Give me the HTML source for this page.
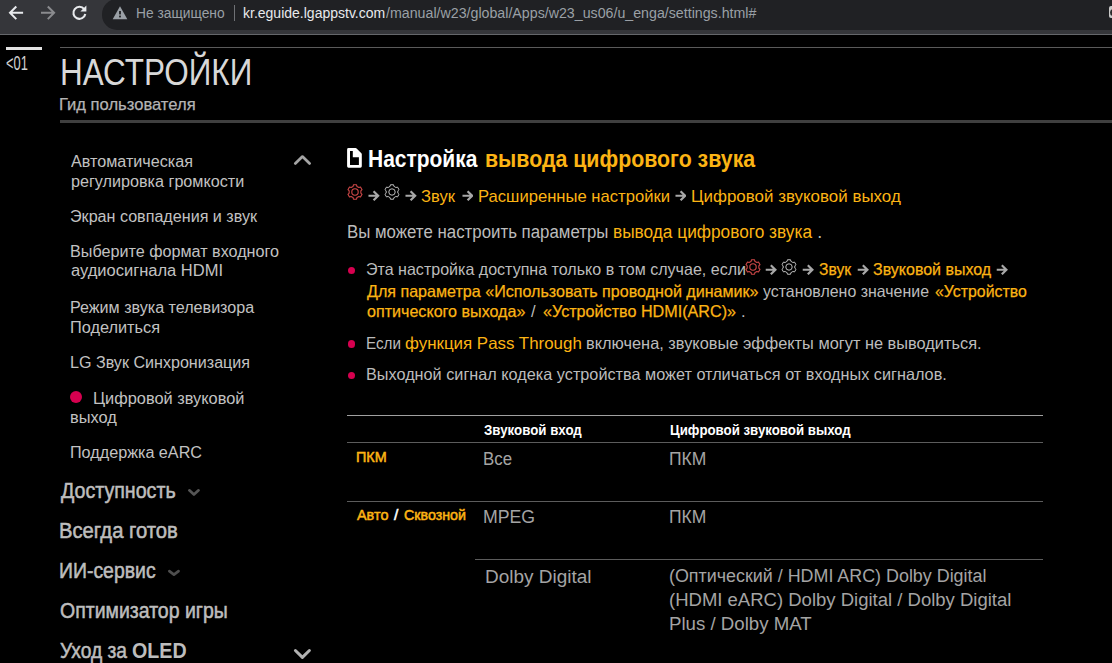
<!DOCTYPE html>
<html><head><meta charset="utf-8"><style>
html,body{margin:0;padding:0;background:#000;width:1112px;height:663px;overflow:hidden;}
body{position:relative;font-family:"Liberation Sans",sans-serif;}
.t{position:absolute;white-space:nowrap;transform-origin:0 50%;}
</style></head><body>
<div style="position:absolute;left:0;top:0;width:1112px;height:34px;background:#35363a"></div>
<div style="position:absolute;left:0;top:34px;width:1112px;height:1px;background:#65676b"></div>
<div style="position:absolute;left:102px;top:-1px;width:1040px;height:30.5px;border-radius:15px;background:#202124"></div>
<svg style="position:absolute;left:0;top:0" width="100" height="34"><path d="M23.1 12.8 H10 M16.3 6.5 L10 12.8 L16.3 19.1" fill="none" stroke="#e8eaed" stroke-width="2"/><path d="M41 12.8 H54.1 M47.8 6.5 L54.1 12.8 L47.8 19.1" fill="none" stroke="#8a8b8e" stroke-width="2"/></svg>
<svg style="position:absolute;left:71px;top:4px" width="17" height="17" viewBox="0 0 17 17"><path d="M13.2 5.2 A6 6 0 1 0 14.3 10" fill="none" stroke="#e8eaed" stroke-width="2.1"/><path d="M15.4 1.6 V7.6 H9.4 Z" fill="#e8eaed"/></svg>
<svg style="position:absolute;left:112px;top:6px" width="16" height="14" viewBox="0 0 16 14"><path d="M8 0.3 L15.3 13.3 H0.7 Z" fill="#9aa0a6"/><rect x="7.1" y="5" width="1.8" height="3.4" fill="#202124"/><rect x="7.1" y="9.6" width="1.8" height="1.8" fill="#202124"/></svg>
<div style="position:absolute;left:233.5px;top:5px;width:1px;height:16px;background:#6f7175"></div>
<div style="position:absolute;left:1109px;top:6px;width:10px;height:12px;border-radius:2px;background:#c8c8c8"></div>
<div style="position:absolute;left:1109.5px;top:8.5px;width:7px;height:7px;border-radius:50%;box-sizing:border-box;border:2px solid #2a2a2a"></div>
<div style="position:absolute;left:6px;top:47px;width:36px;height:3px;background:#e2e2e2"></div>
<div style="position:absolute;left:60px;top:47px;width:1052px;height:1px;background:#5a5a5a"></div>
<div style="position:absolute;left:60px;top:120px;width:1052px;height:3px;background:#3f3f3f"></div>
<svg style="position:absolute;left:0;top:0" width="1112" height="663"><path d="M295.30 163.40 L302.45 156.60 L309.60 163.40" fill="none" stroke="#a4a4a4" stroke-width="2.8" stroke-linecap="round" stroke-linejoin="round"/></svg>
<div style="position:absolute;left:70px;top:391px;width:12px;height:12px;border-radius:50%;background:#d6004f"></div>
<svg style="position:absolute;left:0;top:0" width="1112" height="663"><path d="M189.35 490.35 L193.95 494.55 L198.55 490.35" fill="none" stroke="#555555" stroke-width="2.7" stroke-linecap="round" stroke-linejoin="round"/></svg>
<svg style="position:absolute;left:0;top:0" width="1112" height="663"><path d="M169.35 571.15 L173.95 574.65 L178.55 571.15" fill="none" stroke="#4e4e4e" stroke-width="2.7" stroke-linecap="round" stroke-linejoin="round"/></svg>
<svg style="position:absolute;left:0;top:0" width="1112" height="663"><path d="M295.40 650.50 L302.40 657.40 L309.40 650.50" fill="none" stroke="#b2b2b2" stroke-width="3" stroke-linecap="round" stroke-linejoin="round"/></svg>
<svg style="position:absolute;left:346px;top:148px" width="17" height="21" viewBox="0 0 17 21"><path d="M2.55 1.45 H9.6 L14.35 6.2 V18.35 H2.55 Z" fill="none" stroke="#fff" stroke-width="2.9" stroke-linejoin="round"/><path d="M6.8 1.45 H9.6 L14.35 6.2 V9.3 H6.8 Z" fill="#fff"/></svg>
<svg style="position:absolute;left:347.2px;top:184.4px" width="16" height="16" viewBox="0 0 16 16"><path d="M5.05 2.89 L6.08 2.42 L6.46 0.76 L9.54 0.76 L9.92 2.42 L10.95 2.89 L11.87 3.55 L13.50 3.05 L15.04 5.71 L13.79 6.87 L13.90 8.00 L13.79 9.13 L15.04 10.29 L13.50 12.95 L11.87 12.45 L10.95 13.11 L9.92 13.58 L9.54 15.24 L6.46 15.24 L6.08 13.58 L5.05 13.11 L4.13 12.45 L2.50 12.95 L0.96 10.29 L2.21 9.13 L2.10 8.00 L2.21 6.87 L0.96 5.71 L2.50 3.05 L4.13 3.55 Z" fill="none" stroke="#d04848" stroke-width="1.1" stroke-linejoin="round"/><circle cx="8" cy="8" r="3.2" fill="none" stroke="#d04848" stroke-width="1.1"/></svg>
<svg style="position:absolute;left:368px;top:189.8px" width="11.5" height="11.5" viewBox="0 0 12 12"><path d="M0.5 6 H10.3 M5.8 1.3 L10.6 6 L5.8 10.7" fill="none" stroke="#a8a8a8" stroke-width="2.3" stroke-linecap="butt" stroke-linejoin="miter"/></svg>
<svg style="position:absolute;left:384px;top:184.4px" width="16" height="16" viewBox="0 0 16 16"><path d="M5.05 2.89 L6.08 2.42 L6.46 0.76 L9.54 0.76 L9.92 2.42 L10.95 2.89 L11.87 3.55 L13.50 3.05 L15.04 5.71 L13.79 6.87 L13.90 8.00 L13.79 9.13 L15.04 10.29 L13.50 12.95 L11.87 12.45 L10.95 13.11 L9.92 13.58 L9.54 15.24 L6.46 15.24 L6.08 13.58 L5.05 13.11 L4.13 12.45 L2.50 12.95 L0.96 10.29 L2.21 9.13 L2.10 8.00 L2.21 6.87 L0.96 5.71 L2.50 3.05 L4.13 3.55 Z" fill="none" stroke="#c0c0c0" stroke-width="1.0" stroke-linejoin="round"/><circle cx="8" cy="8" r="3.2" fill="none" stroke="#c0c0c0" stroke-width="1.0"/></svg>
<svg style="position:absolute;left:405px;top:189.8px" width="11.5" height="11.5" viewBox="0 0 12 12"><path d="M0.5 6 H10.3 M5.8 1.3 L10.6 6 L5.8 10.7" fill="none" stroke="#a8a8a8" stroke-width="2.3" stroke-linecap="butt" stroke-linejoin="miter"/></svg>
<svg style="position:absolute;left:461.5px;top:189.8px" width="11.5" height="11.5" viewBox="0 0 12 12"><path d="M0.5 6 H10.3 M5.8 1.3 L10.6 6 L5.8 10.7" fill="none" stroke="#a8a8a8" stroke-width="2.3" stroke-linecap="butt" stroke-linejoin="miter"/></svg>
<svg style="position:absolute;left:674.5px;top:189.8px" width="11.5" height="11.5" viewBox="0 0 12 12"><path d="M0.5 6 H10.3 M5.8 1.3 L10.6 6 L5.8 10.7" fill="none" stroke="#a8a8a8" stroke-width="2.3" stroke-linecap="butt" stroke-linejoin="miter"/></svg>
<div style="position:absolute;left:347.6px;top:266.85px;width:7.5px;height:7.5px;border-radius:50%;background:#d6004f"></div>
<div style="position:absolute;left:347.6px;top:340.45px;width:7.5px;height:7.5px;border-radius:50%;background:#d6004f"></div>
<div style="position:absolute;left:347.6px;top:371.75px;width:7.5px;height:7.5px;border-radius:50%;background:#d6004f"></div>
<svg style="position:absolute;left:745.3px;top:259.1px" width="16" height="16" viewBox="0 0 16 16"><path d="M5.05 2.89 L6.08 2.42 L6.46 0.76 L9.54 0.76 L9.92 2.42 L10.95 2.89 L11.87 3.55 L13.50 3.05 L15.04 5.71 L13.79 6.87 L13.90 8.00 L13.79 9.13 L15.04 10.29 L13.50 12.95 L11.87 12.45 L10.95 13.11 L9.92 13.58 L9.54 15.24 L6.46 15.24 L6.08 13.58 L5.05 13.11 L4.13 12.45 L2.50 12.95 L0.96 10.29 L2.21 9.13 L2.10 8.00 L2.21 6.87 L0.96 5.71 L2.50 3.05 L4.13 3.55 Z" fill="none" stroke="#d04848" stroke-width="1.1" stroke-linejoin="round"/><circle cx="8" cy="8" r="3.2" fill="none" stroke="#d04848" stroke-width="1.1"/></svg>
<svg style="position:absolute;left:765px;top:263.6px" width="12" height="11.5" viewBox="0 0 12 12"><path d="M0.5 6 H10.3 M5.8 1.3 L10.6 6 L5.8 10.7" fill="none" stroke="#a8a8a8" stroke-width="2.3" stroke-linecap="butt" stroke-linejoin="miter"/></svg>
<svg style="position:absolute;left:781.3px;top:259.1px" width="16" height="16" viewBox="0 0 16 16"><path d="M5.05 2.89 L6.08 2.42 L6.46 0.76 L9.54 0.76 L9.92 2.42 L10.95 2.89 L11.87 3.55 L13.50 3.05 L15.04 5.71 L13.79 6.87 L13.90 8.00 L13.79 9.13 L15.04 10.29 L13.50 12.95 L11.87 12.45 L10.95 13.11 L9.92 13.58 L9.54 15.24 L6.46 15.24 L6.08 13.58 L5.05 13.11 L4.13 12.45 L2.50 12.95 L0.96 10.29 L2.21 9.13 L2.10 8.00 L2.21 6.87 L0.96 5.71 L2.50 3.05 L4.13 3.55 Z" fill="none" stroke="#c0c0c0" stroke-width="1.0" stroke-linejoin="round"/><circle cx="8" cy="8" r="3.2" fill="none" stroke="#c0c0c0" stroke-width="1.0"/></svg>
<svg style="position:absolute;left:802px;top:263.6px" width="12" height="11.5" viewBox="0 0 12 12"><path d="M0.5 6 H10.3 M5.8 1.3 L10.6 6 L5.8 10.7" fill="none" stroke="#a8a8a8" stroke-width="2.3" stroke-linecap="butt" stroke-linejoin="miter"/></svg>
<svg style="position:absolute;left:857px;top:263.6px" width="12" height="11.5" viewBox="0 0 12 12"><path d="M0.5 6 H10.3 M5.8 1.3 L10.6 6 L5.8 10.7" fill="none" stroke="#a8a8a8" stroke-width="2.3" stroke-linecap="butt" stroke-linejoin="miter"/></svg>
<svg style="position:absolute;left:996px;top:263.6px" width="12" height="11.5" viewBox="0 0 12 12"><path d="M0.5 6 H10.3 M5.8 1.3 L10.6 6 L5.8 10.7" fill="none" stroke="#a8a8a8" stroke-width="2.3" stroke-linecap="butt" stroke-linejoin="miter"/></svg>
<div style="position:absolute;left:347px;top:415px;width:696px;height:1px;background:#a0a0a0"></div>
<div style="position:absolute;left:347px;top:442px;width:696px;height:1px;background:#5c5c5c"></div>
<div style="position:absolute;left:347px;top:501px;width:696px;height:1px;background:#5c5c5c"></div>
<div style="position:absolute;left:475px;top:559px;width:568px;height:1px;background:#5c5c5c"></div>
<div class="t" id="t0" style="left:136.19px;top:6.05px;font-size:14px;line-height:14px;font-weight:400;color:#9aa0a6;transform:scaleX(0.9847);">Не защищено</div>
<div class="t" id="t1" style="left:243.40px;top:6.05px;font-size:14px;line-height:14px;font-weight:400;color:#e8eaed;transform:scaleX(1.0003);">kr.eguide.lgappstv.com</div>
<div class="t" id="t2" style="left:385.60px;top:6.05px;font-size:14px;line-height:14px;font-weight:400;color:#9aa0a6;transform:scaleX(1.0147);">/manual/w23/global/Apps/w23_us06/u_enga/settings.html#</div>
<div class="t" id="t3" style="left:6.20px;top:52.67px;font-size:20px;line-height:20px;font-weight:400;color:#d0d0d0;transform:scaleX(0.6428);">&lt;01</div>
<div class="t" id="t4" style="left:59.56px;top:54.25px;font-size:37.5px;line-height:37.5px;font-weight:400;color:#d8d8d8;transform:scaleX(0.8392);">НАСТРОЙКИ</div>
<div class="t" id="t5" style="left:58.99px;top:95.61px;font-size:17px;line-height:17px;font-weight:400;-webkit-text-stroke:0.25px;color:#b4b4b4;transform:scaleX(0.9755);">Гид пользователя</div>
<div class="t" id="t6" style="left:71.00px;top:154.15px;font-size:16px;line-height:16px;font-weight:400;color:#c2c2c2;transform:scaleX(1.0098);">Автоматическая</div>
<div class="t" id="t7" style="left:71.00px;top:174.45px;font-size:16px;line-height:16px;font-weight:400;color:#c2c2c2;transform:scaleX(1.0097);">регулировка громкости</div>
<div class="t" id="t8" style="left:69.99px;top:209.45px;font-size:16px;line-height:16px;font-weight:400;color:#c2c2c2;transform:scaleX(1.0070);">Экран совпадения и звук</div>
<div class="t" id="t9" style="left:69.99px;top:244.45px;font-size:16px;line-height:16px;font-weight:400;color:#c2c2c2;transform:scaleX(1.0098);">Выберите формат входного</div>
<div class="t" id="t10" style="left:71.00px;top:262.85px;font-size:16px;line-height:16px;font-weight:400;color:#c2c2c2;transform:scaleX(1.0310);">аудиосигнала HDMI</div>
<div class="t" id="t11" style="left:70.00px;top:299.65px;font-size:16px;line-height:16px;font-weight:400;color:#c2c2c2;transform:scaleX(1.0066);">Режим звука телевизора</div>
<div class="t" id="t12" style="left:69.98px;top:320.45px;font-size:16px;line-height:16px;font-weight:400;color:#c2c2c2;transform:scaleX(1.0192);">Поделиться</div>
<div class="t" id="t13" style="left:69.99px;top:354.85px;font-size:16px;line-height:16px;font-weight:400;color:#c2c2c2;transform:scaleX(1.0059);">LG Звук Синхронизация</div>
<div class="t" id="t14" style="left:93.19px;top:390.95px;font-size:16px;line-height:16px;font-weight:400;color:#c2c2c2;transform:scaleX(1.0227);">Цифровой звуковой</div>
<div class="t" id="t15" style="left:69.98px;top:410.15px;font-size:16px;line-height:16px;font-weight:400;color:#c2c2c2;transform:scaleX(1.0246);">выход</div>
<div class="t" id="t16" style="left:69.99px;top:445.05px;font-size:16px;line-height:16px;font-weight:400;color:#c2c2c2;transform:scaleX(1.0108);">Поддержка eARC</div>
<div class="t" id="t17" style="left:61.19px;top:480.37px;font-size:22px;line-height:22px;font-weight:400;-webkit-text-stroke:0.55px;color:#bdbdbd;transform:scaleX(0.8916);">Доступность</div>
<div class="t" id="t18" style="left:59.19px;top:520.37px;font-size:22px;line-height:22px;font-weight:400;-webkit-text-stroke:0.55px;color:#bdbdbd;transform:scaleX(0.9197);">Всегда готов</div>
<div class="t" id="t19" style="left:59.19px;top:560.37px;font-size:22px;line-height:22px;font-weight:400;-webkit-text-stroke:0.55px;color:#bdbdbd;transform:scaleX(0.8830);">ИИ-сервис</div>
<div class="t" id="t20" style="left:60.20px;top:600.37px;font-size:22px;line-height:22px;font-weight:400;-webkit-text-stroke:0.55px;color:#bdbdbd;transform:scaleX(0.8859);">Оптимизатор игры</div>
<div class="t" id="t21" style="left:60.21px;top:639.77px;font-size:22px;line-height:22px;font-weight:400;-webkit-text-stroke:0.55px;color:#bdbdbd;transform:scaleX(0.8729);">Уход за</div>
<div class="t" id="t22" style="left:132.00px;top:639.77px;font-size:22px;line-height:22px;font-weight:700;color:#bdbdbd;transform:scaleX(0.8934);">OLED</div>
<div class="t" id="t23" style="left:367.80px;top:147.18px;font-size:24px;line-height:24px;font-weight:700;color:#ffffff;transform:scaleX(0.8737);">Настройка</div>
<div class="t" id="t24" style="left:484.60px;top:147.18px;font-size:24px;line-height:24px;font-weight:700;color:#fcb414;transform:scaleX(0.8888);">вывода цифрового звука</div>
<div class="t" id="t25" style="left:420.98px;top:187.61px;font-size:17px;line-height:17px;font-weight:400;color:#fcb414;transform:scaleX(0.9753);">Звук</div>
<div class="t" id="t26" style="left:477.99px;top:187.61px;font-size:17px;line-height:17px;font-weight:400;color:#fcb414;transform:scaleX(0.9776);">Расширенные настройки</div>
<div class="t" id="t27" style="left:691.00px;top:187.61px;font-size:17px;line-height:17px;font-weight:400;color:#fcb414;transform:scaleX(0.9962);">Цифровой звуковой выход</div>
<div class="t" id="t28" style="left:346.59px;top:222.66px;font-size:18px;line-height:18px;font-weight:400;color:#bcbcbc;transform:scaleX(0.9360);">Вы можете настроить параметры</div>
<div class="t" id="t29" style="left:612.80px;top:222.66px;font-size:18px;line-height:18px;font-weight:400;color:#fcb414;transform:scaleX(0.9593);">вывода цифрового звука</div>
<div class="t" id="t30" style="left:817.20px;top:222.66px;font-size:18px;line-height:18px;font-weight:400;color:#bcbcbc;">.</div>
<div class="t" id="t31" style="left:365.60px;top:261.13px;font-size:16.5px;line-height:16.5px;font-weight:400;color:#bcbcbc;transform:scaleX(0.9724);">Эта настройка доступна только в том случае, если</div>
<div class="t" id="t32" style="left:819.22px;top:261.13px;font-size:16.5px;line-height:16.5px;font-weight:400;-webkit-text-stroke:0.25px;color:#fcb414;transform:scaleX(0.9460);">Звук</div>
<div class="t" id="t33" style="left:873.00px;top:261.13px;font-size:16.5px;line-height:16.5px;font-weight:400;-webkit-text-stroke:0.25px;color:#fcb414;transform:scaleX(0.9697);">Звуковой выход</div>
<div class="t" id="t34" style="left:366.60px;top:282.53px;font-size:16.5px;line-height:16.5px;font-weight:400;-webkit-text-stroke:0.25px;color:#fcb414;transform:scaleX(0.9748);">Для параметра «Использовать проводной динамик»</div>
<div class="t" id="t35" style="left:763.00px;top:282.53px;font-size:16.5px;line-height:16.5px;font-weight:400;color:#bcbcbc;transform:scaleX(0.9651);">установлено значение</div>
<div class="t" id="t36" style="left:934.60px;top:282.53px;font-size:16.5px;line-height:16.5px;font-weight:400;-webkit-text-stroke:0.25px;color:#fcb414;transform:scaleX(0.9613);">«Устройство</div>
<div class="t" id="t37" style="left:366.60px;top:302.73px;font-size:16.5px;line-height:16.5px;font-weight:400;-webkit-text-stroke:0.25px;color:#fcb414;transform:scaleX(0.9754);">оптического выхода»</div>
<div class="t" id="t38" style="left:531.00px;top:302.73px;font-size:16.5px;line-height:16.5px;font-weight:400;color:#bcbcbc;">/</div>
<div class="t" id="t39" style="left:543.20px;top:302.73px;font-size:16.5px;line-height:16.5px;font-weight:400;-webkit-text-stroke:0.25px;color:#fcb414;transform:scaleX(0.9785);">«Устройство HDMI(ARC)»</div>
<div class="t" id="t40" style="left:741.00px;top:302.73px;font-size:16.5px;line-height:16.5px;font-weight:400;color:#bcbcbc;">.</div>
<div class="t" id="t41" style="left:365.58px;top:335.13px;font-size:16.5px;line-height:16.5px;font-weight:400;color:#bcbcbc;transform:scaleX(0.9237);">Если</div>
<div class="t" id="t42" style="left:405.00px;top:335.13px;font-size:16.5px;line-height:16.5px;font-weight:400;color:#fcb414;transform:scaleX(1.0244);">функция Pass Through</div>
<div class="t" id="t43" style="left:586.39px;top:335.13px;font-size:16.5px;line-height:16.5px;font-weight:400;color:#bcbcbc;transform:scaleX(0.9916);">включена, звуковые эффекты могут не выводиться.</div>
<div class="t" id="t44" style="left:365.60px;top:366.03px;font-size:16.5px;line-height:16.5px;font-weight:400;color:#bcbcbc;transform:scaleX(0.9846);">Выходной сигнал кодека устройства может отличаться от входных сигналов.</div>
<div class="t" id="t45" style="left:484.00px;top:421.78px;font-size:15.5px;line-height:15.5px;font-weight:700;color:#ffffff;transform:scaleX(0.8579);">Звуковой вход</div>
<div class="t" id="t46" style="left:669.80px;top:421.78px;font-size:15.5px;line-height:15.5px;font-weight:700;color:#ffffff;transform:scaleX(0.8551);">Цифровой звуковой выход</div>
<div class="t" id="t47" style="left:356.16px;top:448.98px;font-size:15.5px;line-height:15.5px;font-weight:400;-webkit-text-stroke:0.55px;color:#fcb414;transform:scaleX(0.9268);">ПКМ</div>
<div class="t" id="t48" style="left:482.96px;top:449.76px;font-size:18px;line-height:18px;font-weight:400;color:#a4a4a4;transform:scaleX(0.9357);">Все</div>
<div class="t" id="t49" style="left:668.71px;top:449.76px;font-size:18px;line-height:18px;font-weight:400;color:#a4a4a4;transform:scaleX(0.9719);">ПКМ</div>
<div class="t" id="t50" style="left:356.80px;top:506.68px;font-size:15.5px;line-height:15.5px;font-weight:400;-webkit-text-stroke:0.55px;color:#fcb414;transform:scaleX(0.9298);">Авто</div>
<div class="t" id="t51" style="left:394.00px;top:506.68px;font-size:15.5px;line-height:15.5px;font-weight:400;-webkit-text-stroke:0.55px;color:#ffffff;">/</div>
<div class="t" id="t52" style="left:404.00px;top:506.68px;font-size:15.5px;line-height:15.5px;font-weight:400;-webkit-text-stroke:0.55px;color:#fcb414;transform:scaleX(0.9194);">Сквозной</div>
<div class="t" id="t53" style="left:482.96px;top:507.96px;font-size:18px;line-height:18px;font-weight:400;color:#a4a4a4;transform:scaleX(0.9824);">MPEG</div>
<div class="t" id="t54" style="left:668.71px;top:507.96px;font-size:18px;line-height:18px;font-weight:400;color:#a4a4a4;transform:scaleX(0.9719);">ПКМ</div>
<div class="t" id="t55" style="left:484.59px;top:567.96px;font-size:18px;line-height:18px;font-weight:400;color:#a4a4a4;transform:scaleX(1.0534);">Dolby Digital</div>
<div class="t" id="t56" style="left:668.60px;top:567.06px;font-size:18px;line-height:18px;font-weight:400;color:#a4a4a4;transform:scaleX(0.9936);">(Оптический / HDMI ARC) Dolby Digital</div>
<div class="t" id="t57" style="left:668.60px;top:591.16px;font-size:18px;line-height:18px;font-weight:400;color:#a4a4a4;transform:scaleX(1.0280);">(HDMI eARC) Dolby Digital / Dolby Digital</div>
<div class="t" id="t58" style="left:668.60px;top:614.76px;font-size:18px;line-height:18px;font-weight:400;color:#a4a4a4;transform:scaleX(1.0357);">Plus / Dolby MAT</div>
</body></html>
